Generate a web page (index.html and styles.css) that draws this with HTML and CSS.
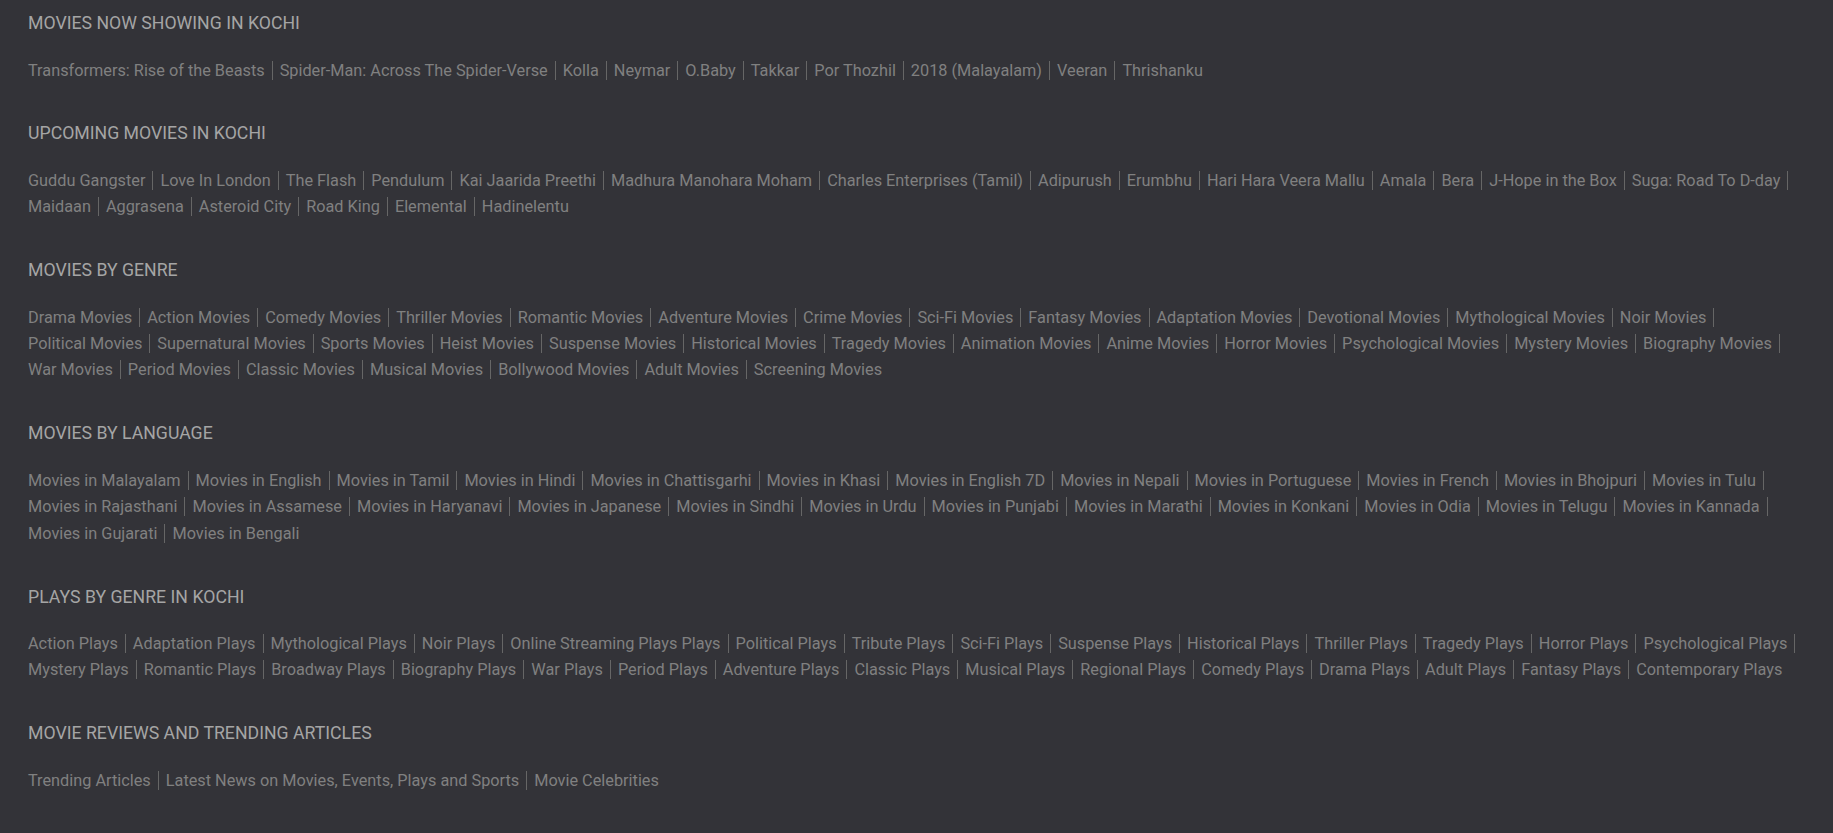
FILE: index.html
```html
<!DOCTYPE html>
<html lang="en">
<head>
<meta charset="utf-8">
<title>Movies in Kochi</title>
<link rel="stylesheet" href="styles.css">
</head>
<body>
<div class="footer-links">
  <section class="link-group">
    <h2 class="group-title">Movies Now Showing in Kochi</h2>
    <ul class="link-list">
      <li><a href="#">Transformers: Rise of the Beasts</a></li>
      <li><a href="#">Spider-Man: Across The Spider-Verse</a></li>
      <li><a href="#">Kolla</a></li>
      <li><a href="#">Neymar</a></li>
      <li><a href="#">O.Baby</a></li>
      <li><a href="#">Takkar</a></li>
      <li><a href="#">Por Thozhil</a></li>
      <li><a href="#">2018 (Malayalam)</a></li>
      <li><a href="#">Veeran</a></li>
      <li><a href="#">Thrishanku</a></li>
    </ul>
  </section>
  <section class="link-group">
    <h2 class="group-title">Upcoming Movies in Kochi</h2>
    <ul class="link-list">
      <li><a href="#">Guddu Gangster</a></li>
      <li><a href="#">Love In London</a></li>
      <li><a href="#">The Flash</a></li>
      <li><a href="#">Pendulum</a></li>
      <li><a href="#">Kai Jaarida Preethi</a></li>
      <li><a href="#">Madhura Manohara Moham</a></li>
      <li><a href="#">Charles Enterprises (Tamil)</a></li>
      <li><a href="#">Adipurush</a></li>
      <li><a href="#">Erumbhu</a></li>
      <li><a href="#">Hari Hara Veera Mallu</a></li>
      <li><a href="#">Amala</a></li>
      <li><a href="#">Bera</a></li>
      <li><a href="#">J-Hope in the Box</a></li>
      <li><a href="#">Suga: Road To D-day</a></li>
      <li><a href="#">Maidaan</a></li>
      <li><a href="#">Aggrasena</a></li>
      <li><a href="#">Asteroid City</a></li>
      <li><a href="#">Road King</a></li>
      <li><a href="#">Elemental</a></li>
      <li><a href="#">Hadinelentu</a></li>
    </ul>
  </section>
  <section class="link-group">
    <h2 class="group-title">Movies by Genre</h2>
    <ul class="link-list">
      <li><a href="#">Drama Movies</a></li>
      <li><a href="#">Action Movies</a></li>
      <li><a href="#">Comedy Movies</a></li>
      <li><a href="#">Thriller Movies</a></li>
      <li><a href="#">Romantic Movies</a></li>
      <li><a href="#">Adventure Movies</a></li>
      <li><a href="#">Crime Movies</a></li>
      <li><a href="#">Sci-Fi Movies</a></li>
      <li><a href="#">Fantasy Movies</a></li>
      <li><a href="#">Adaptation Movies</a></li>
      <li><a href="#">Devotional Movies</a></li>
      <li><a href="#">Mythological Movies</a></li>
      <li><a href="#">Noir Movies</a></li>
      <li><a href="#">Political Movies</a></li>
      <li><a href="#">Supernatural Movies</a></li>
      <li><a href="#">Sports Movies</a></li>
      <li><a href="#">Heist Movies</a></li>
      <li><a href="#">Suspense Movies</a></li>
      <li><a href="#">Historical Movies</a></li>
      <li><a href="#">Tragedy Movies</a></li>
      <li><a href="#">Animation Movies</a></li>
      <li><a href="#">Anime Movies</a></li>
      <li><a href="#">Horror Movies</a></li>
      <li><a href="#">Psychological Movies</a></li>
      <li><a href="#">Mystery Movies</a></li>
      <li><a href="#">Biography Movies</a></li>
      <li><a href="#">War Movies</a></li>
      <li><a href="#">Period Movies</a></li>
      <li><a href="#">Classic Movies</a></li>
      <li><a href="#">Musical Movies</a></li>
      <li><a href="#">Bollywood Movies</a></li>
      <li><a href="#">Adult Movies</a></li>
      <li><a href="#">Screening Movies</a></li>
    </ul>
  </section>
  <section class="link-group">
    <h2 class="group-title">Movies by Language</h2>
    <ul class="link-list">
      <li><a href="#">Movies in Malayalam</a></li>
      <li><a href="#">Movies in English</a></li>
      <li><a href="#">Movies in Tamil</a></li>
      <li><a href="#">Movies in Hindi</a></li>
      <li><a href="#">Movies in Chattisgarhi</a></li>
      <li><a href="#">Movies in Khasi</a></li>
      <li><a href="#">Movies in English 7D</a></li>
      <li><a href="#">Movies in Nepali</a></li>
      <li><a href="#">Movies in Portuguese</a></li>
      <li><a href="#">Movies in French</a></li>
      <li><a href="#">Movies in Bhojpuri</a></li>
      <li><a href="#">Movies in Tulu</a></li>
      <li><a href="#">Movies in Rajasthani</a></li>
      <li><a href="#">Movies in Assamese</a></li>
      <li><a href="#">Movies in Haryanavi</a></li>
      <li><a href="#">Movies in Japanese</a></li>
      <li><a href="#">Movies in Sindhi</a></li>
      <li><a href="#">Movies in Urdu</a></li>
      <li><a href="#">Movies in Punjabi</a></li>
      <li><a href="#">Movies in Marathi</a></li>
      <li><a href="#">Movies in Konkani</a></li>
      <li><a href="#">Movies in Odia</a></li>
      <li><a href="#">Movies in Telugu</a></li>
      <li><a href="#">Movies in Kannada</a></li>
      <li><a href="#">Movies in Gujarati</a></li>
      <li><a href="#">Movies in Bengali</a></li>
    </ul>
  </section>
  <section class="link-group">
    <h2 class="group-title">Plays by Genre in Kochi</h2>
    <ul class="link-list">
      <li><a href="#">Action Plays</a></li>
      <li><a href="#">Adaptation Plays</a></li>
      <li><a href="#">Mythological Plays</a></li>
      <li><a href="#">Noir Plays</a></li>
      <li><a href="#">Online Streaming Plays Plays</a></li>
      <li><a href="#">Political Plays</a></li>
      <li><a href="#">Tribute Plays</a></li>
      <li><a href="#">Sci-Fi Plays</a></li>
      <li><a href="#">Suspense Plays</a></li>
      <li><a href="#">Historical Plays</a></li>
      <li><a href="#">Thriller Plays</a></li>
      <li><a href="#">Tragedy Plays</a></li>
      <li><a href="#">Horror Plays</a></li>
      <li><a href="#">Psychological Plays</a></li>
      <li><a href="#">Mystery Plays</a></li>
      <li><a href="#">Romantic Plays</a></li>
      <li><a href="#">Broadway Plays</a></li>
      <li><a href="#">Biography Plays</a></li>
      <li><a href="#">War Plays</a></li>
      <li><a href="#">Period Plays</a></li>
      <li><a href="#">Adventure Plays</a></li>
      <li><a href="#">Classic Plays</a></li>
      <li><a href="#">Musical Plays</a></li>
      <li><a href="#">Regional Plays</a></li>
      <li><a href="#">Comedy Plays</a></li>
      <li><a href="#">Drama Plays</a></li>
      <li><a href="#">Adult Plays</a></li>
      <li><a href="#">Fantasy Plays</a></li>
      <li><a href="#">Contemporary Plays</a></li>
    </ul>
  </section>
  <section class="link-group">
    <h2 class="group-title">Movie Reviews and Trending Articles</h2>
    <ul class="link-list">
      <li><a href="#">Trending Articles</a></li>
      <li><a href="#">Latest News on Movies, Events, Plays and Sports</a></li>
      <li><a href="#">Movie Celebrities</a></li>
    </ul>
  </section>
</div>
</body>
</html>
```

FILE: styles.css
```css
html, body {
  margin: 0;
  padding: 0;
  background: #333338;
}

body {
  font-family: Roboto, "Liberation Sans", Arial, sans-serif;
  min-height: 833px;
}

.footer-links {
  padding: 12px 28px 0;
  display: flex;
  flex-direction: column;
  gap: 42.9px;
}

.group-title {
  margin: 0 0 26.5px;
  font-size: 17.7px;
  line-height: 22px;
  font-weight: 400;
  text-transform: uppercase;
  color: #a5a5a5;
}

.link-list {
  list-style: none;
  margin: 0;
  padding: 0;
  display: flex;
  flex-wrap: wrap;
  row-gap: 7.4px;
}

.link-list li {
  display: flex;
}

.link-list a {
  display: block;
  font-size: 16.3px;
  line-height: 19px;
  color: #808080;
  text-decoration: none;
  padding-right: 7px;
  margin-right: 7px;
  border-right: 1px solid #666666;
  white-space: nowrap;
}

.link-list li:last-child a {
  border-right: 0;
  padding-right: 0;
  margin-right: 0;
}
```
